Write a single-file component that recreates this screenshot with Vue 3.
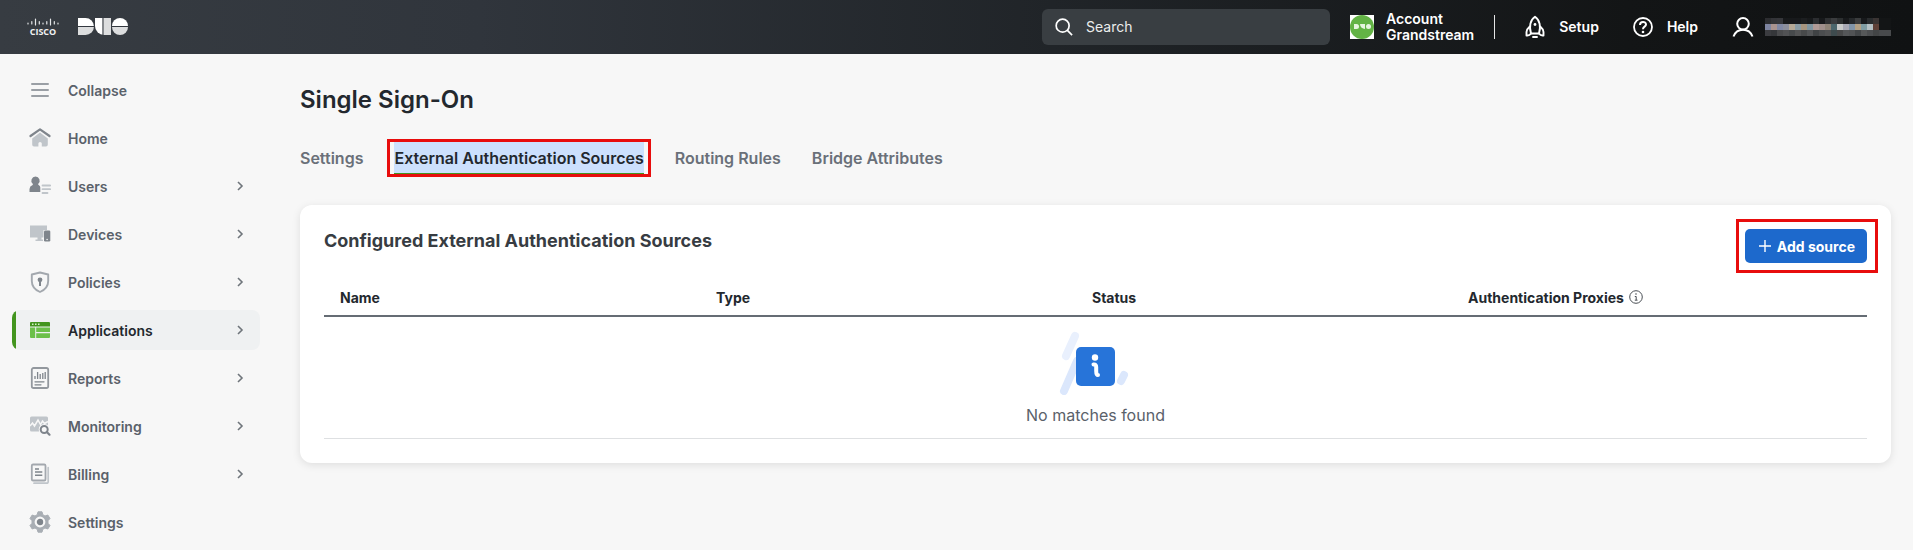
<template>
  <div class="page">
    <header class="topbar">
      <a href="#" class="brand" aria-label="Cisco Duo">
        <svg class="cisco" width="34" height="20" viewBox="0 0 34 20" aria-hidden="true">
          <g stroke="#e4e6e8" stroke-width="1.2" stroke-linecap="round">
            <path d="M2 6v1M5.800 4.500v2.500M9.500 2v6M13.300 4.500v2.500M17 6v1M20.800 4.500v2.500M24.500 2v6M28.300 4.500v2.500M32 6v1" />
          </g>
          <text x="17" y="18" text-anchor="middle" fill="#f0f1f2">CISCO</text>
        </svg>
        <span class="duo">
          <i class="duo-d"></i>
          <i class="duo-u"></i>
          <i class="duo-o"></i>
        </span>
      </a>

      <div class="tools">
        <label class="search">
          <svg width="18" height="18" viewBox="0 0 20 20" fill="none" stroke="#fff" stroke-width="1.900">
            <circle cx="8.500" cy="8.500" r="7.200" />
            <path d="M13.500 13.500L19 19" />
          </svg>
          <input type="text" placeholder="Search" aria-label="Search" />
        </label>
        <a href="#" class="account">
          <span class="avatar">
            <span class="avatar-disc">
              <span class="duo duo-small">
                <i class="duo-d"></i>
                <i class="duo-u"></i>
                <i class="duo-o"></i>
              </span>
            </span>
          </span>
          <span>Account<br />Grandstream</span>
        </a>
        <span class="divider"></span>
        <button type="button" class="tool">
          <svg width="20" height="24" viewBox="0 0 20 24" fill="none" stroke="#fff" stroke-width="1.900" stroke-linejoin="round" stroke-linecap="round">
            <path d="M6 18.500C4 12 5 5 10 1.800C15 5 16 12 14 18.500Z" />
            <path d="M4.800 11.500C2.500 13.500 1.500 15 1.500 17V20.500C3.500 20.800 5 20 6 18.500M15.200 11.500C17.500 13.500 18.500 15 18.500 17V20.500C16.500 20.800 15 20 14 18.500M8 22h4" />
            <circle cx="10" cy="9.500" r="1.400" fill="#fff" stroke="none" />
          </svg>
          Setup
        </button>
        <button type="button" class="tool help">
          <svg width="20" height="20" viewBox="0 0 20 20" fill="none" stroke="#fff" stroke-width="1.800">
            <circle cx="10" cy="10" r="9" />
            <path d="M7 8C7 4 13 4 13 7.600C13 9.800 10 9.600 10 12.200" stroke-width="2" />
            <circle cx="10" cy="15" r="1.300" fill="#fff" stroke="none" />
          </svg>
          Help
        </button>
        <button type="button" class="tool user" aria-label="User menu">
          <svg width="22" height="20" viewBox="0 0 22 20" fill="none" stroke="#fff" stroke-width="2">
            <circle cx="11" cy="6.800" r="5.800" />
            <path d="M1.500 19.500C3 15.500 6.500 12.800 11 12.800C15.500 12.800 19 15.500 20.500 19.500" />
          </svg>
          <span class="mosaic">
            <i v-for="(c, i) in mosaic" :key="i" :style="{ background: c }"></i>
          </span>
        </button>
      </div>
    </header>

    <div class="body">
      <nav class="sidebar">
        <a v-for="item in items" :key="item.name" href="#" class="nav-item" :class="{ active: item.active }">
          <svg width="22" height="22" viewBox="0 0 22 22" fill="none" aria-hidden="true">
            <template v-if="item.name === 'Collapse'">
              <path d="M3 5h16M3 11h16M3 17h16" stroke="#9a9fa5" stroke-width="2" stroke-linecap="round" />
            </template>
            <template v-else-if="item.name === 'Home'">
              <path d="M11 5.500L18.800 11.500V17.500Q18.800 19.500 17 19.500H12.800V16.500Q12.800 15 11 15Q9.400 15 9.400 16.500V19.500H5Q3.200 19.500 3.200 17.500V11.500Z" fill="#c0c5ca" />
              <path d="M1.500 9L11 2.300L20.500 9" stroke="#7f858c" stroke-width="2.200" stroke-linecap="round" stroke-linejoin="round" />
            </template>
            <template v-else-if="item.name === 'Users'">
              <path d="M6.500 1.500A4.200 4.200 0 0 1 9.300 8.800Q8.800 9.800 10 10.300Q11.300 11 11.300 12.500V17H0.500V14Q0.800 11 3.300 10.300Q4.300 9.800 3.700 8.800A4.200 4.200 0 0 1 6.500 1.500Z" fill="#7f858c" />
              <path d="M13.500 10.500h7.700M13.500 14.200h7.700M13.500 18h5" stroke="#c0c5ca" stroke-width="1.800" stroke-linecap="round" />
            </template>
            <template v-else-if="item.name === 'Devices'">
              <path d="M1 2.500h17V7H14.500V14.500H1ZM8.500 14.500h4v2h1.500v1.500H6.500v-1.500h2Z" fill="#c0c5ca" />
              <rect x="15" y="7.500" width="6.300" height="11" rx="1.200" fill="#7f858c" />
              <circle cx="18.100" cy="16.500" r="0.700" fill="#fff" />
            </template>
            <template v-else-if="item.name === 'Policies'">
              <path d="M11 1.500L19.200 3.500V10Q19.200 17.500 11 21Q2.800 17.500 2.800 10V3.500Z" stroke="#a3a8ae" stroke-width="1.900" stroke-linejoin="round" />
              <circle cx="11" cy="8.800" r="2.400" fill="#7f858c" />
              <path d="M11 9v6" stroke="#7f858c" stroke-width="2" />
            </template>
            <template v-else-if="item.name === 'Applications'">
              <path d="M1 6V4Q1 3 2 3H20Q21 3 21 4V7.500H1Z" fill="#43951f" />
              <path d="M3 5.200h1.500M6 5.200h1.500M9 5.200h1.500" stroke="#d8f0cc" stroke-width="1.500" />
              <path d="M1 8.500H6.200V19H2Q1 19 1 18ZM7.200 8.500H21V13H7.200ZM7.200 14.200H21V18Q21 19 20 19H7.200Z" fill="#6cc04a" />
            </template>
            <template v-else-if="item.name === 'Reports'">
              <rect x="2.800" y="1" width="16.400" height="20" rx="1.800" stroke="#93989e" stroke-width="1.800" />
              <path d="M6 9v3M8.600 5v7M11.200 7v5M13.800 6v6M16.200 5v7" stroke="#7f858c" stroke-width="1.300" />
              <path d="M6 14.800h9M6 17.800h6" stroke="#7f858c" stroke-width="1.300" stroke-linecap="round" />
            </template>
            <template v-else-if="item.name === 'Monitoring'">
              <rect x="1" y="1.500" width="18" height="15" rx="1.500" fill="#c0c5ca" />
              <path d="M1 11L3.500 8L5.500 11L9 5L11.500 9.500L13.500 6L15.500 8.500L19 6.500" stroke="#f7f7f7" stroke-width="1.500" />
              <circle cx="15.200" cy="14.500" r="5.500" fill="#f7f7f7" />
              <circle cx="15.200" cy="14.500" r="3.500" stroke="#7f858c" stroke-width="2" />
              <path d="M17.800 17L20.500 19.700" stroke="#7f858c" stroke-width="2.200" stroke-linecap="round" />
            </template>
            <template v-else-if="item.name === 'Billing'">
              <path d="M19.200 4.500V18.500Q19.200 20.200 17.500 20.200H5" stroke="#c0c5ca" stroke-width="1.700" stroke-linecap="round" />
              <rect x="2.800" y="1.500" width="13.700" height="16" rx="1.300" stroke="#a3a8ae" stroke-width="1.800" />
              <path d="M6 6h4M6 9h7.300M6 12.200h7.300" stroke="#7f858c" stroke-width="1.600" />
            </template>
            <template v-else>
              <path d="M9 0.800H13L13.800 3.700L16 5L18.800 4L21 7.500L19 9.700V12.300L21 14.500L18.800 18L16 17L13.800 18.300L13 21.200H9L8.200 18.300L6 17L3.200 18L1 14.500L3 12.300V9.700L1 7.500L3.200 4L6 5L8.200 3.700Z" fill="#a9aeb4" stroke="#a9aeb4" stroke-linejoin="round" />
              <circle cx="11" cy="11" r="4.300" fill="#7f858c" stroke="#f7f7f7" stroke-width="2.200" />
            </template>
          </svg>
          <span class="nav-label">{{ item.name }}</span>
          <svg v-if="item.more" class="chevron" width="8" height="10" viewBox="0 0 8 10" fill="none">
            <path d="M2 1L6 5L2 9" stroke="#6f757b" stroke-width="1.600" />
          </svg>
        </a>
      </nav>

      <main class="content">
        <h1>Single Sign-On</h1>
        <nav class="tabs">
          <a v-for="tab in tabs" :key="tab" href="#" :class="{ selected: tab === currentTab }" @click.prevent="currentTab = tab">{{ tab }}</a>
        </nav>

        <section class="card">
          <div class="card-head">
            <h2>Configured External Authentication Sources</h2>
            <button type="button" class="add">
              <svg width="14" height="14" viewBox="0 0 14 14" stroke="#fff" stroke-width="1.400">
                <path d="M7 1v12M1 7h12" />
              </svg>
              Add source
            </button>
          </div>
          <table>
            <thead>
              <tr>
                <th>Name</th>
                <th>Type</th>
                <th>Status</th>
                <th class="proxies">
                  Authentication Proxies
                  <svg width="14" height="14" viewBox="0 0 14 14" fill="none" stroke="#4a4f55">
                    <circle cx="7" cy="7" r="6.300" />
                    <path d="M5.800 6.500H7.200V10M5.800 10.200H8.500" />
                    <circle cx="7" cy="4" r="0.800" fill="#4a4f55" stroke="none" />
                  </svg>
                </th>
              </tr>
            </thead>
            <tbody>
              <tr>
                <td colspan="4">
                  <svg class="empty-icon" width="77" height="64" viewBox="0 0 77 64" fill="none">
                    <path d="M18 5L9 25" stroke="#e9f0fd" stroke-width="8" stroke-linecap="round" />
                    <path d="M20 30L7 60" stroke="#dbe7fc" stroke-width="8" stroke-linecap="round" />
                    <path d="M67 44L64 50" stroke="#dbe7fc" stroke-width="8" stroke-linecap="round" />
                    <rect x="19" y="16" width="39" height="39" rx="5" fill="#2774d9" />
                    <circle cx="38" cy="26.500" r="3.200" fill="#fff" />
                    <path d="M36.500 33.500Q39.200 33 39.200 36V40Q39.200 44 41 44" stroke="#fff" stroke-width="4" stroke-linecap="round" />
                  </svg>
                  <p>No matches found</p>
                </td>
              </tr>
            </tbody>
          </table>
        </section>
      </main>
    </div>
  </div>
</template>

<script setup>
import { ref } from 'vue';

const items = [
  { name: 'Collapse' },
  { name: 'Home' },
  { name: 'Users', more: true },
  { name: 'Devices', more: true },
  { name: 'Policies', more: true },
  { name: 'Applications', more: true, active: true },
  { name: 'Reports', more: true },
  { name: 'Monitoring', more: true },
  { name: 'Billing', more: true },
  { name: 'Settings' },
];

const tabs = ['Settings', 'External Authentication Sources', 'Routing Rules', 'Bridge Attributes'];
const currentTab = ref('External Authentication Sources');

// obscured user name, three rows of 21 blocks
const mosaic = [
  '#2c2d30', '#333438', '#35363a', '#17191b', '#17191b', '#17191b', '#1c1e20', '#17191b', '#2b2d30', '#17191b', '#2e3032', '#3a3c3e', '#2c2f30', '#17191b', '#25282a', '#3a3c3d', '#17191b', '#292c2e', '#3a3433', '#131516', '#131516',
  '#7d84a0', '#a9938f', '#8088a4', '#8b8e9c', '#b5a996', '#8a9ca5', '#a6957f', '#7f95a0', '#b09a96', '#a0908c', '#8f8478', '#4b666c', '#c8cac9', '#a8a9b4', '#8094a8', '#b2a084', '#7f9ca2', '#b4c0c4', '#5e4037', '#131516', '#131516',
  '#3b3c40', '#35373a', '#4a4b4d', '#515254', '#474a4c', '#535455', '#484a4b', '#535557', '#404345', '#4b4d4f', '#515253', '#3e4b4e', '#48494a', '#555759', '#515355', '#434648', '#565859', '#4c4e50', '#434546', '#484a4c', '#484a4c',
];
</script>

<style>
body {
  margin: 0;
  background: #f7f7f7;
}
</style>

<style scoped>
.page {
  font-family: Inter, "Liberation Sans", sans-serif;
  font-size: 14px;
  color: #23282e;
}

a {
  color: inherit;
  text-decoration: none;
}

button {
  border: none;
  font: inherit;
  cursor: pointer;
}

svg {
  flex: none;
}

.topbar {
  display: flex;
  align-items: center;
  justify-content: space-between;
  box-sizing: border-box;
  height: 54px;
  padding: 0 22px 1px 26px;
  background: linear-gradient(90deg, #373c42 0%, #30353c 25%, #202428 55%, #131516 85%, #101213 100%);
  color: #fff;
}

.brand {
  display: flex;
  align-items: center;
  gap: 18px;
}

.cisco text {
  font: 700 9px "Open Sans", sans-serif;
}

.duo {
  display: flex;
  gap: 1px;
}

.duo i {
  width: 16px;
  height: 17px;
}

.duo-d {
  border-radius: 0 9px 9px 0;
  background: linear-gradient(#fff 8px, #33383f 8px, #33383f 9px, #dcddde 9px);
}

.duo-u {
  border-radius: 0 0 0 9px;
  background: linear-gradient(90deg, #fff 7px, #85888c 7px, #85888c 9px, #dcddde 9px);
}

.duo-o {
  border-radius: 9px;
  background: linear-gradient(#fff 8px, #33383f 8px, #33383f 9px, #dcddde 9px);
}

.duo-small i {
  width: 5px;
  height: 5px;
  background: #e6f5df;
}

.tools {
  display: flex;
  align-items: center;
}

.search {
  display: flex;
  align-items: center;
  gap: 13px;
  box-sizing: border-box;
  width: 288px;
  height: 36px;
  padding: 0 13px;
  border-radius: 6px;
  background: #393e42;
}

.search input {
  flex: 1;
  min-width: 0;
  padding: 0;
  border: none;
  outline: none;
  background: none;
  color: #fff;
  font: inherit;
}

.search input::placeholder {
  color: #eceded;
}

.account {
  display: flex;
  align-items: center;
  gap: 12px;
  margin-left: 20px;
  font-weight: 600;
  line-height: 16px;
}

.avatar {
  width: 24px;
  height: 24px;
  background: #fff;
}

.avatar-disc {
  display: flex;
  align-items: center;
  justify-content: center;
  height: 24px;
  border-radius: 50%;
  background: #63b345;
}

.divider {
  width: 1px;
  height: 24px;
  margin: 0 30px 0 20px;
  background: #e4e5e6;
}

.tool {
  display: flex;
  align-items: center;
  gap: 14px;
  padding: 0;
  background: none;
  color: #fff;
  font-weight: 600;
}

.help,
.user {
  margin-left: 34px;
}

.user {
  gap: 11px;
}

.mosaic {
  display: grid;
  grid-template-columns: repeat(21, 6px);
  grid-auto-rows: 6px;
}

.body {
  display: flex;
}

.sidebar {
  display: flex;
  flex-direction: column;
  gap: 8px;
  box-sizing: border-box;
  width: 260px;
  padding: 16px 0 8px 12px;
}

.nav-item {
  display: flex;
  align-items: center;
  gap: 17px;
  height: 40px;
  padding: 0 16px 0 17px;
  border-radius: 8px;
  color: #5a616a;
  font-weight: 600;
}

.nav-item.active {
  background: linear-gradient(90deg, #43951f 4px, #eff1f2 4px);
  color: #23282e;
}

.nav-label {
  flex: 1;
}

.content {
  flex: 1;
  min-width: 0;
  padding: 30px 22px 24px 40px;
}

h1 {
  margin: 0;
  font-size: 24px;
  font-weight: 600;
  line-height: 32px;
}

.tabs {
  display: flex;
  gap: 31px;
  margin-top: 26px;
  font-size: 16px;
  font-weight: 600;
  line-height: 32px;
  color: #6a7079;
}

.tabs a {
  position: relative;
}

.tabs .selected {
  background: linear-gradient(0deg, #43951f 1px, #cce0fd 1px);
  color: #23282e;
}

/* callout frames */
.tabs .selected::after,
.add::after {
  content: "";
  position: absolute;
  inset: -3px -7px;
  border: 3px solid #e80d0d;
}

.card {
  margin-top: 31px;
  padding: 24px;
  border-radius: 12px;
  background: #fff;
  box-shadow: 0 2px 8px rgba(0, 0, 0, 0.1);
}

.card-head {
  display: flex;
  justify-content: space-between;
}

h2 {
  margin: 0;
  font-size: 18px;
  font-weight: 700;
  line-height: 24px;
  color: #373c42;
}

.add {
  position: relative;
  display: flex;
  align-items: center;
  gap: 5px;
  height: 34px;
  padding: 0 12px 0 13px;
  border-radius: 5px;
  background: #1d69cc;
  color: #fff;
  font-weight: 700;
}

.add::after {
  inset: -10px -11px -10px -9px;
}

table {
  width: 100%;
  margin-top: 20px;
  border-collapse: collapse;
  table-layout: fixed;
}

th {
  height: 29px;
  padding: 0 16px 3px;
  border-bottom: 2px solid #656c74;
  text-align: left;
  font-weight: 700;
}

.proxies {
  width: 383px;
}

.proxies svg {
  margin-left: 2px;
  vertical-align: -1px;
}

td {
  padding: 14px 0 11px;
  border-bottom: 1px solid #dee0e2;
  text-align: center;
  font-size: 16px;
  color: #5a616a;
}

.empty-icon {
  display: block;
  margin: 0 auto;
}

td p {
  margin: 8px 0 0;
  line-height: 24px;
}
</style>
